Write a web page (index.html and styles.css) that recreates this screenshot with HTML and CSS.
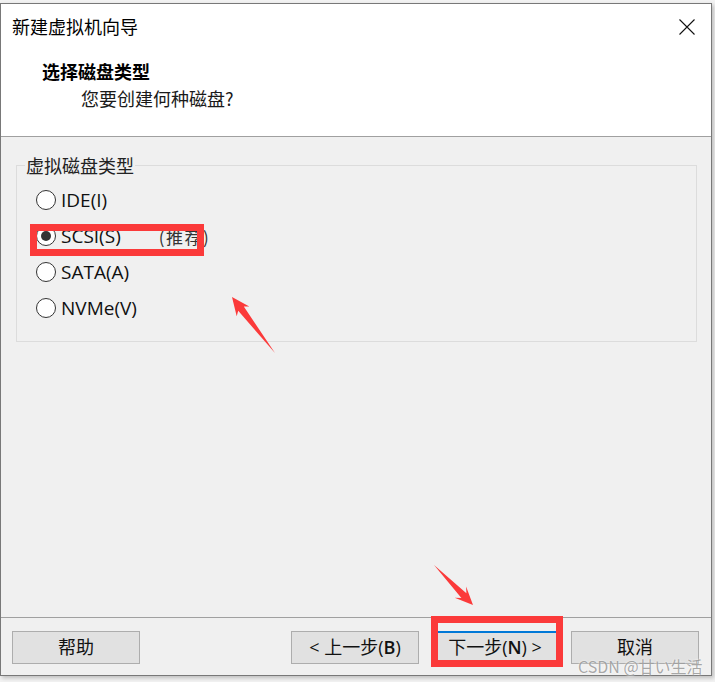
FILE: index.html
```html
<!DOCTYPE html>
<html lang="zh">
<head>
<meta charset="utf-8">
<title>新建虚拟机向导</title>
<link rel="stylesheet" href="styles.css">
</head>
<body>
<div class="window">
  <div class="top">
    <div class="titlebar">
      <span class="title">新建虚拟机向导</span>
      <svg class="close" width="16" height="16" viewBox="0 0 16 16"><path d="M0.5 0.5 L15.5 15.5 M15.5 0.5 L0.5 15.5" stroke="#111" stroke-width="1.1" fill="none"/></svg>
    </div>
    <div class="header">
      <div class="h-title">选择磁盘类型</div>
      <div class="h-sub">您要创建何种磁盘?</div>
    </div>
  </div>
  <div class="main">
    <fieldset class="group">
      <legend class="legend">虚拟磁盘类型</legend>
      <div class="opt"><span class="radio"></span><span class="lbl">IDE(I)</span></div>
      <div class="opt"><span class="radio checked"></span><span class="lbl">SCSI(S)</span><span class="rec">(推荐)</span></div>
      <div class="opt"><span class="radio"></span><span class="lbl">SATA(A)</span></div>
      <div class="opt"><span class="radio"></span><span class="lbl">NVMe(V)</span></div>
    </fieldset>
  </div>
  <div class="footer">
    <button class="btn">帮助</button>
    <div class="spacer"></div>
    <button class="btn">&lt; 上一步(<span class="acc">B</span>)</button>
    <button class="btn default">下一步(<span class="acc">N</span>) &gt;</button>
    <button class="btn">取消</button>
  </div>
</div>
<div class="mark mark-scsi"></div>
<div class="mark mark-next"></div>
<svg class="arrows" width="715" height="682" viewBox="0 0 715 682">
  <polygon fill="#fb3a3a" points="232,297 249.3,306.4 243.8,306.6 275,353 238.2,310.8 236.7,316.2"/>
  <polygon fill="#fb3a3a" points="473,605 466.1,586.5 466.4,593.3 434,565 461.4,598.1 454.7,597.7"/>
</svg>
<div class="watermark">CSDN @甘い生活</div>
</body>
</html>
```

FILE: styles.css
```css
* { box-sizing: border-box; }

html, body {
  margin: 0;
  padding: 0;
}

body {
  width: 715px;
  height: 682px;
  background: #f2f2f2;
  font-family: "Open Sans", "Noto Sans CJK SC", sans-serif;
  color: #000;
  overflow: hidden;
  padding-top: 3px;
}

.window {
  width: 712px;
  height: 673px;
  border: 1px solid #787878;
  background: #f0f0f0;
  display: flex;
  flex-direction: column;
  box-shadow: 2px 2px 4px rgba(0, 0, 0, 0.22);
}

.top {
  height: 133px;
  background: #fff;
  border-bottom: 1px solid #a0a0a0;
  flex: none;
}

.titlebar {
  height: 44px;
  display: flex;
  align-items: center;
  justify-content: space-between;
  padding: 0 16px 0 11px;
}

.title {
  font-family: "Noto Sans CJK SC", sans-serif;
  font-size: 18px;
  line-height: 24px;
}

.close {
  display: block;
  margin-top: 1px;
}

.header {
  padding: 10px 0 0 41px;
  font-family: "Noto Sans CJK SC", sans-serif;
  font-size: 18px;
}

.h-title {
  font-weight: 700;
  line-height: 26px;
}

.h-sub {
  line-height: 28px;
  margin-left: 39px;
  color: #1a1a1a;
}

.main {
  flex: 1;
  border-bottom: 1px solid #a0a0a0;
  padding: 16px 14px 0 15px;
}

.group {
  margin: 0;
  border: 1px solid #dcdcdc;
  padding: 5px 0 15px 19px;
}

.legend {
  font-family: "Noto Sans CJK SC", sans-serif;
  font-size: 18px;
  line-height: 24px;
  color: #222;
  padding: 0 1px;
  margin-left: -11px;
}

.opt {
  height: 36px;
  display: flex;
  align-items: center;
  font-size: 19px;
  color: #111;
}

.radio {
  width: 20px;
  height: 20px;
  border: 1px solid #333;
  border-radius: 50%;
  background: #fff;
  display: flex;
  align-items: center;
  justify-content: center;
  margin-right: 5px;
  flex: none;
}

.radio.checked::after {
  content: "";
  width: 10px;
  height: 10px;
  border-radius: 50%;
  background: #333;
}

.lbl {
  line-height: 24px;
}

.rec {
  margin-left: 38px;
  font-family: "Noto Sans CJK SC", sans-serif;
  font-size: 17px;
  letter-spacing: 1.5px;
  color: #333;
}

.footer {
  height: 57px;
  flex: none;
  display: flex;
  align-items: flex-start;
  gap: 12px;
  padding: 13px 12px 0 11px;
}

.spacer { flex: 1; }

.btn {
  width: 128px;
  height: 33px;
  background: #e1e1e1;
  border: 1px solid #adadad;
  font-family: "Open Sans", "Noto Sans CJK SC", sans-serif;
  font-size: 18px;
  color: #111;
  padding: 0 0 2px;
  line-height: 28px;
  text-align: center;
}

.btn.default {
  border: 2px solid #0078d7;
}

.acc { font-weight: 600; }

.mark {
  position: absolute;
  border: 7px solid #fb3a3a;
}

.mark-scsi {
  left: 30px;
  top: 224px;
  width: 174px;
  height: 32px;
}

.mark-next {
  left: 431px;
  top: 616px;
  width: 132px;
  height: 51px;
}

.arrows {
  position: absolute;
  left: 0;
  top: 0;
}

.watermark {
  position: absolute;
  left: 578px;
  top: 655px;
  font-family: "Noto Sans CJK SC", sans-serif;
  font-size: 16px;
  line-height: 22px;
  color: rgba(140, 140, 140, 0.75);
  text-shadow: 0 0 2px #fff;
}
```
